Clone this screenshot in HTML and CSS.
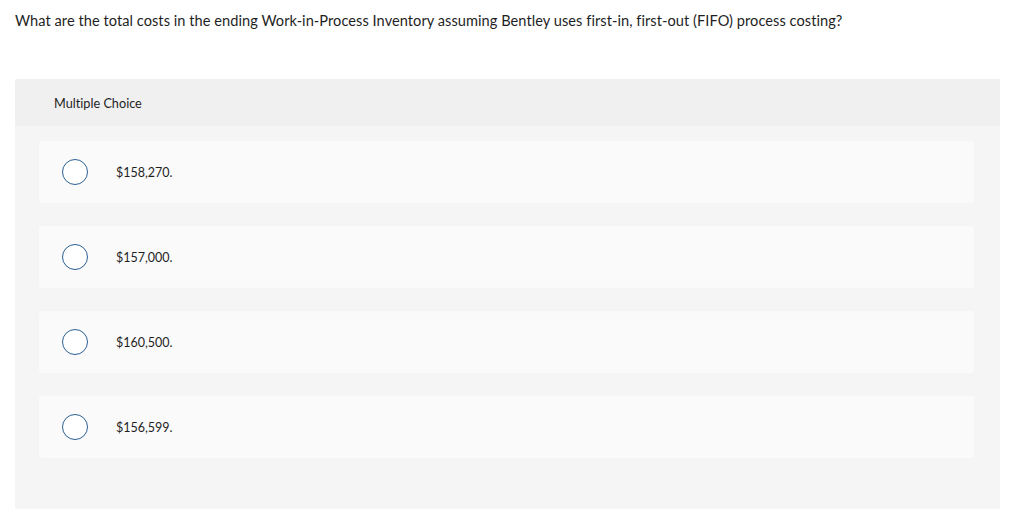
FILE: index.html
```html
<!DOCTYPE html>
<html>
<head>
<meta charset="utf-8">
<link rel="stylesheet" href="styles.css">
</head>
<body>
<div class="page">
  <p class="question">What are the total costs in the ending Work-in-Process Inventory assuming Bentley uses first-in, first-out (FIFO) process costing?</p>
  <div class="panel">
    <div class="panel-head">Multiple Choice</div>
    <div class="options">
      <div class="option"><span class="radio"></span><span class="label">$158,270.</span></div>
      <div class="option"><span class="radio"></span><span class="label">$157,000.</span></div>
      <div class="option"><span class="radio"></span><span class="label">$160,500.</span></div>
      <div class="option"><span class="radio"></span><span class="label">$156,599.</span></div>
    </div>
  </div>
</div>
</body>
</html>
```
FILE: styles.css
```css
html, body {
  margin: 0;
  padding: 0;
  background: #fff;
}
body {
  font-family: "Lato", "Liberation Sans", sans-serif;
  color: #1f1f1f;
  font-variant-ligatures: none;
}
.page {
  padding: 0 24px 0 15px;
}
.question {
  margin: 0;
  padding-top: 12px;
  height: 79px;
  box-sizing: border-box;
  font-size: 14.6px;
  letter-spacing: 0.05px;
  line-height: 18px;
}
.panel {
  width: 985px;
  background: #f5f5f5;
  border-radius: 2px;
  padding-bottom: 51px;
}
.panel-head {
  height: 47px;
  box-sizing: border-box;
  background: #f0f0f0;
  padding: 16px 0 0 39px;
  font-size: 12.7px;
  line-height: 16px;
  border-radius: 2px 2px 0 0;
}
.options {
  display: flex;
  flex-direction: column;
  gap: 23px;
  padding: 15px 26px 0 24px;
}
.option {
  height: 62px;
  background: #fafafa;
  border-radius: 3px;
  display: flex;
  align-items: center;
  padding-left: 23px;
}
.radio {
  width: 24px;
  height: 24px;
  border: 1.5px solid #2b5f94;
  border-radius: 50%;
  background: #fff;
  flex: none;
}
.label {
  margin-left: 28px;
  font-size: 12.5px;
}
```
